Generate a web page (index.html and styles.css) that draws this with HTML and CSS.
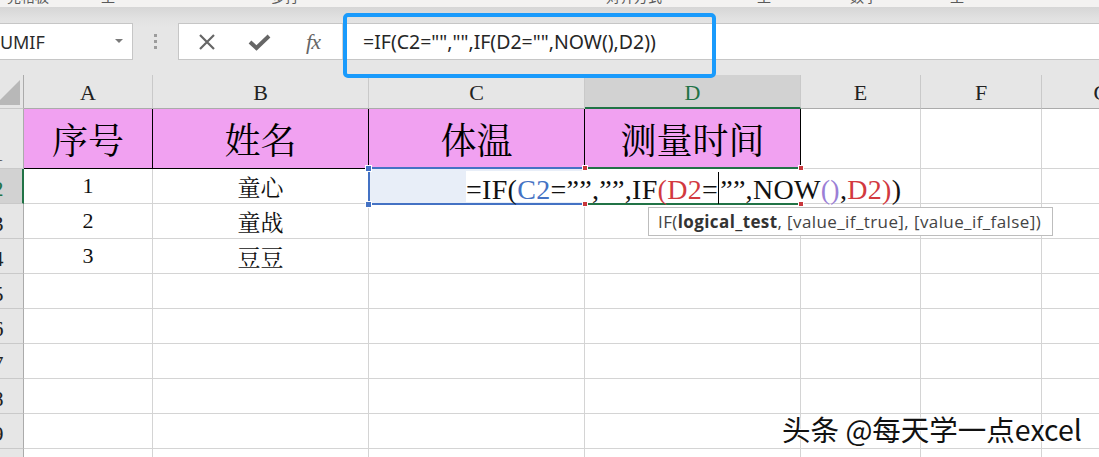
FILE: index.html
```html
<!DOCTYPE html>
<html lang="zh">
<head>
<meta charset="utf-8">
<title>Excel</title>
<link rel="stylesheet" href="styles.css">
</head>
<body>
<div class="app">
  <div class="ribbon-edge">
    <span class="rb rb1">完格板</span>
    <span class="rb rb2">工</span>
    <span class="rb rb3">多打</span>
    <span class="rb rb4">对齐方式</span>
    <span class="rb rb5">工</span>
    <span class="rb rb6">数字</span>
    <span class="rb rb7">工</span>
  </div>

  <div class="fbar">
    <div class="namebox">
      <span class="nb-text">SUMIF</span>
      <span class="caret"></span>
    </div>
    <div class="grip"><i></i><i></i><i></i></div>
    <div class="fbox">
      <div class="fbtns">
        <span class="fbtn">
          <svg width="20" height="20" viewBox="0 0 20 20"><path d="M3 3 L17 17 M17 3 L3 17" stroke="#666666" stroke-width="2.2" fill="none"/></svg>
        </span>
        <span class="fbtn">
          <svg width="24" height="20" viewBox="0 0 24 20"><path d="M2 10 L8.5 16 L21 4" stroke="#666666" stroke-width="4" fill="none" stroke-linejoin="miter"/></svg>
        </span>
        <span class="fbtn fx">fx</span>
      </div>
      <div class="finput">=IF(C2="","",IF(D2="",NOW(),D2))</div>
    </div>
  </div>

  <div class="sheet">
    <div class="row rhead">
      <div class="cell ch corner"><span class="tri"></span></div>
      <div class="cell ca">A</div>
      <div class="cell cb">B</div>
      <div class="cell cc">C</div>
      <div class="cell cd active-col">D</div>
      <div class="cell ce">E</div>
      <div class="cell cf">F</div>
      <div class="cell cg">G</div>
    </div>
    <div class="row r1">
      <div class="cell ch">1</div>
      <div class="cell ca title">序号</div>
      <div class="cell cb title">姓名</div>
      <div class="cell cc title">体温</div>
      <div class="cell cd title">测量时间</div>
      <div class="cell ce"></div>
      <div class="cell cf"></div>
      <div class="cell cg"></div>
    </div>
    <div class="row">
      <div class="cell ch active-row">2</div>
      <div class="cell ca num">1</div>
      <div class="cell cb name">童心</div>
      <div class="cell cc refc"></div>
      <div class="cell cd"></div>
      <div class="cell ce"></div>
      <div class="cell cf"></div>
      <div class="cell cg"></div>
    </div>
    <div class="row">
      <div class="cell ch">3</div>
      <div class="cell ca num">2</div>
      <div class="cell cb name">童战</div>
      <div class="cell cc"></div>
      <div class="cell cd"></div>
      <div class="cell ce"></div>
      <div class="cell cf"></div>
      <div class="cell cg"></div>
    </div>
    <div class="row">
      <div class="cell ch">4</div>
      <div class="cell ca num">3</div>
      <div class="cell cb name">豆豆</div>
      <div class="cell cc"></div>
      <div class="cell cd"></div>
      <div class="cell ce"></div>
      <div class="cell cf"></div>
      <div class="cell cg"></div>
    </div>
    <div class="row">
      <div class="cell ch">5</div>
      <div class="cell ca"></div><div class="cell cb"></div><div class="cell cc"></div><div class="cell cd"></div><div class="cell ce"></div><div class="cell cf"></div><div class="cell cg"></div>
    </div>
    <div class="row">
      <div class="cell ch">6</div>
      <div class="cell ca"></div><div class="cell cb"></div><div class="cell cc"></div><div class="cell cd"></div><div class="cell ce"></div><div class="cell cf"></div><div class="cell cg"></div>
    </div>
    <div class="row">
      <div class="cell ch">7</div>
      <div class="cell ca"></div><div class="cell cb"></div><div class="cell cc"></div><div class="cell cd"></div><div class="cell ce"></div><div class="cell cf"></div><div class="cell cg"></div>
    </div>
    <div class="row">
      <div class="cell ch">8</div>
      <div class="cell ca"></div><div class="cell cb"></div><div class="cell cc"></div><div class="cell cd"></div><div class="cell ce"></div><div class="cell cf"></div><div class="cell cg"></div>
    </div>
    <div class="row">
      <div class="cell ch">9</div>
      <div class="cell ca"></div><div class="cell cb"></div><div class="cell cc"></div><div class="cell cd"></div><div class="cell ce"></div><div class="cell cf"></div><div class="cell cg"></div>
    </div>
    <div class="row">
      <div class="cell ch">10</div>
      <div class="cell ca"></div><div class="cell cb"></div><div class="cell cc"></div><div class="cell cd"></div><div class="cell ce"></div><div class="cell cf"></div><div class="cell cg"></div>
    </div>
  </div>

  <!-- overlays -->
  <div class="hl"></div>
  <div class="sel sel-c2"></div>
  <div class="sel sel-d2"></div>
  <span class="hd hd-blue hd-c2a"></span>
  <span class="hd hd-blue hd-c2b"></span>
  <span class="hd hd-red hd-d2a"></span>
  <span class="hd hd-red hd-d2b"></span>
  <span class="hd hd-red hd-d2c"></span>
  <span class="hd hd-red hd-d2d"></span>
  <div class="edit"><span>=IF(</span><span class="k-blue">C2</span><span>=””,””,IF</span><span class="k-red">(D2</span><span>=</span><span class="caret-line"></span><span>””,NOW</span><span class="k-purple">()</span><span>,</span><span class="k-red">D2)</span><span>)</span></div>
  <div class="tip">IF(<b>logical_test</b>, [value_if_true], [value_if_false])</div>
  <div class="wm">头条 @每天学一点excel</div>
</div>
</body>
</html>
```

FILE: styles.css
```css
html, body {
  margin: 0;
  padding: 0;
  overflow: hidden;
  background: #ffffff;
}

.app {
  position: relative;
  width: 1099px;
  height: 457px;
  overflow: hidden;
  font-family: "Liberation Serif", serif;
}

/* ribbon bottom edge */
.ribbon-edge {
  height: 7px;
  background: #f3f2f1;
  position: relative;
  overflow: hidden;
  display: flex;
  font-family: "Noto Sans CJK SC", sans-serif;
  font-size: 14px;
  color: #5a5a5a;
}
.rb {
  display: block;
  line-height: 14px;
  margin-top: -11px;
  white-space: nowrap;
}
.rb1 { margin-left: 7px; }
.rb2 { margin-left: 52px; }
.rb3 { margin-left: 156px; }
.rb4 { margin-left: 307px; }
.rb5 { margin-left: 95px; }
.rb6 { margin-left: 79px; }
.rb7 { margin-left: 72px; }

/* formula bar */
.fbar {
  height: 68px;
  box-sizing: border-box;
  padding-top: 16px;
  display: flex;
  align-items: flex-start;
  background: linear-gradient(#d6d6d6 0px, #e2e2e2 12px, #e6e6e6 20px, #e6e6e6 100%);
}
.namebox {
  margin-left: -14px;
  width: 147px;
  height: 37px;
  box-sizing: border-box;
  background: #ffffff;
  border: 1px solid #c6c6c6;
  display: flex;
  align-items: center;
  justify-content: space-between;
  padding: 0 9px 0 3px;
  font-family: "Noto Sans", sans-serif;
  font-size: 18px;
  color: #2b2b2b;
}
.caret {
  width: 0;
  height: 0;
  border-left: 4px solid transparent;
  border-right: 4px solid transparent;
  border-top: 4px solid #7a7a7a;
  margin-top: -2px;
}
.grip {
  width: 45px;
  height: 37px;
  display: flex;
  flex-direction: column;
  align-items: center;
  justify-content: center;
  gap: 3px;
}
.grip i {
  display: block;
  width: 3px;
  height: 3px;
  background: #9c9c9c;
}
.fbox {
  flex: 1;
  height: 37px;
  box-sizing: border-box;
  background: #ffffff;
  border: 1px solid #c6c6c6;
  border-right: none;
  display: flex;
  align-items: center;
}
.fbtns {
  width: 164px;
  height: 100%;
  box-sizing: border-box;
  padding-left: 16px;
  display: flex;
  align-items: center;
  gap: 29px;
  border-right: 1px solid #d4d4d4;
}
.fbtn {
  width: 24px;
  height: 24px;
  display: flex;
  align-items: center;
  justify-content: center;
}
.fx {
  font-family: "Liberation Serif", serif;
  font-style: italic;
  font-size: 22px;
  color: #666666;
  letter-spacing: -1px;
}
.finput {
  padding-left: 20px;
  font-family: "Noto Sans", sans-serif;
  font-size: 19.5px;
  color: #262626;
  white-space: nowrap;
  line-height: 35px;
}

/* sheet */
.sheet {
  margin-left: -27px;
}
.row {
  display: flex;
  height: 35px;
}
.rhead { height: 34px; }
.r1 { height: 60px; }

.cell {
  box-sizing: border-box;
  flex: none;
  height: 100%;
  border-right: 1px solid #d4d4d4;
  border-bottom: 1px solid #d4d4d4;
  display: flex;
  align-items: center;
  justify-content: center;
  font-family: "Liberation Serif", serif;
  font-size: 22px;
  color: #111111;
}
.ch { width: 51px; }
.ca { width: 129px; }
.cb { width: 216px; }
.cc { width: 216px; }
.cd { width: 216px; }
.ce { width: 120px; }
.cf { width: 121px; }
.cg { width: 120px; }

.rhead .cell {
  background: #e6e6e6;
  border-right-color: #c9c9c9;
  border-bottom-color: #ababab;
  color: #222222;
  padding-top: 2px;
}
.rhead .active-col {
  background: #d2d2d2;
  color: #217346;
  border-bottom: 2px solid #217346;
  padding-top: 3px;
}
.corner {
  justify-content: flex-end !important;
  align-items: flex-end !important;
  padding: 0 3px 3px 0;
}
.tri {
  width: 0;
  height: 0;
  border-left: 25px solid transparent;
  border-bottom: 25px solid #b8b8b8;
}

.row .ch {
  background: #e6e6e6;
  border-right-color: #ababab;
  border-bottom-color: #c9c9c9;
  color: #222222;
  align-items: flex-end;
  line-height: 22px;
  padding-bottom: 3px;
}
.row .ch.active-row {
  background: #d2d2d2;
  color: #217346;
  border-right: 2px solid #217346;
  padding-left: 1px;
}

.r1 .title {
  background: #f1a1f1;
  border-right-color: #000000;
  border-bottom-color: #000000;
  font-family: "Noto Serif CJK SC", "Noto Sans CJK SC", serif;
  font-size: 36px;
  color: #000000;
}
.num {
  font-size: 22px;
}
.name {
  font-family: "Noto Serif CJK SC", "Noto Sans CJK SC", serif;
  font-size: 23px;
}
.refc {
  background: #e8eef8;
}

/* overlays */
.hl {
  position: absolute;
  left: 343px;
  top: 13px;
  width: 373px;
  height: 65px;
  box-sizing: border-box;
  border: 4px solid #1a9bfc;
  border-radius: 5px;
}
.sel {
  position: absolute;
  box-sizing: border-box;
  top: 167px;
  height: 38px;
}
.sel-c2 {
  left: 368px;
  width: 218px;
  border: 2px solid #4472c4;
}
.sel-d2 {
  left: 585px;
  width: 217px;
  border-top: 2px solid #217346;
  border-bottom: 2px solid #217346;
}
.hd {
  position: absolute;
  width: 6px;
  height: 6px;
  box-sizing: border-box;
  border: 1px solid #ffffff;
}
.hd-blue { background: #4472c4; width: 7px; height: 7px; }
.hd-red { background: #c8383d; }
.hd-c2a { left: 365px; top: 165px; }
.hd-c2b { left: 365px; top: 201px; }
.hd-d2a { left: 582px; top: 165px; }
.hd-d2b { left: 582px; top: 201px; }
.hd-d2c { left: 798px; top: 165px; }
.hd-d2d { left: 798px; top: 201px; }

.edit {
  position: absolute;
  left: 466px;
  top: 171px;
  height: 31px;
  padding-right: 6px;
  background: #ffffff;
  white-space: nowrap;
  font-family: "Liberation Serif", serif;
  font-size: 28px;
  line-height: 37px;
  letter-spacing: 0.3px;
  color: #111111;
  display: flex;
  align-items: flex-start;
}
.edit span { display: block; height: 31px; }
.k-blue { color: #4472c4; }
.k-red { color: #d2393f; }
.k-purple { color: #9b7fd6; }
.edit .caret-line {
  width: 1px;
  height: 32px;
  background: #000000;
  margin: 1px 1px 0 0;
}

.tip {
  position: absolute;
  left: 648px;
  top: 207px;
  width: 405px;
  height: 29px;
  box-sizing: border-box;
  border: 1px solid #bdbdbd;
  background: #ffffff;
  padding-left: 9px;
  font-family: "Open Sans", sans-serif;
  font-size: 17px;
  letter-spacing: 0.4px;
  line-height: 27px;
  color: #444444;
  white-space: nowrap;
}
.tip b { font-weight: 700; color: #333333; }

.wm {
  position: absolute;
  left: 782px;
  top: 410px;
  font-family: "Noto Sans CJK SC", sans-serif;
  font-size: 28.5px;
  line-height: 38px;
  color: #111111;
  white-space: nowrap;
  text-shadow: 0 0 2px #ffffff, 0 0 2px #ffffff, 1px 1px 1px #ffffff, -1px -1px 1px #ffffff;
}
```
